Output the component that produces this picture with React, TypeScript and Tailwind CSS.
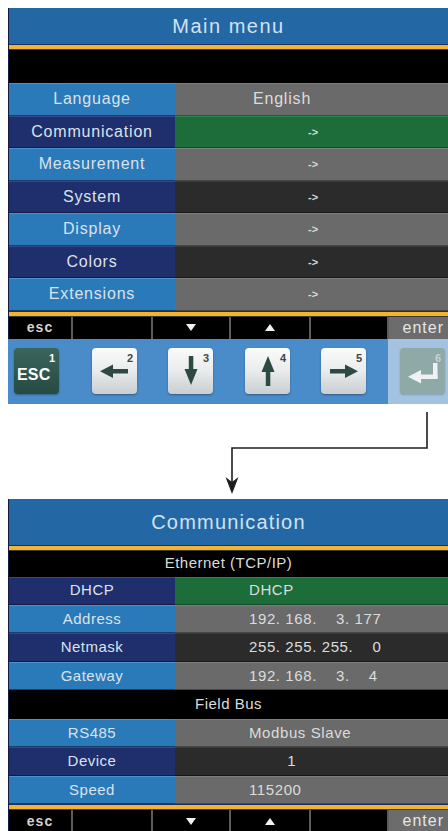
import React from "react";

const LEFT: Record<string, string> = {
  light: "bg-[#2a79b9] border-t border-t-[#4a93cc] border-b border-b-[#1a3e6a]",
  navy: "bg-[#1f2e6c] border-t border-t-[#34488a] border-b border-b-[#101a45]",
};
const RIGHT: Record<string, string> = {
  gray: "bg-[#6a6a6a] border-t border-t-[#7e7e7e] border-b border-b-[#474747]",
  green: "bg-[#1c6d39] border-t border-t-[#2c8450] border-b border-b-[#124a26]",
  dark: "bg-[#2b2b2b] border-t border-t-[#3a3a3a] border-b border-b-[#161616]",
};

type RowProps = {
  label: string;
  value: string;
  l: string;
  r: string;
  big?: boolean;
  arrow?: boolean;
  valueClass?: string;
};

function Row({ label, value, l, r, big, arrow, valueClass }: RowProps) {
  return (
    <div className={big ? "flex h-[32.5px]" : "flex h-[28.4px]"}>
      <div
        className={`w-[166px] flex items-center justify-center text-[#dbe2ea] ${
          big ? "text-[16px] tracking-[0.8px]" : "text-[15px] tracking-[0.5px]"
        } ${LEFT[l]}`}
      >
        {label}
      </div>
      <div
        className={`flex-1 flex items-center whitespace-pre ${RIGHT[r]} ${
          arrow
            ? "pl-[133px] text-[11px] text-[#d8d8d8] font-bold"
            : big
            ? "pl-[78px] text-[16px] tracking-[0.8px] text-[#dcdcdc]"
            : "pl-[74px] text-[15px] tracking-[0.6px] text-[#dcdcdc]"
        } ${valueClass ?? ""}`}
      >
        {value}
      </div>
    </div>
  );
}

function Sep() {
  return (
    <div className="h-[6px] bg-[#f2b431] border-t-[1.5px] border-t-[#1d2f5e] border-b-[1.5px] border-b-[#3a3a3a]" />
  );
}

function TriDown() {
  return (
    <svg width="10" height="7" viewBox="0 0 10 7">
      <polygon points="0,0 10,0 5,7" fill="#f2f2f2" />
    </svg>
  );
}
function TriUp() {
  return (
    <svg width="10" height="7" viewBox="0 0 10 7">
      <polygon points="0,7 10,7 5,0" fill="#f2f2f2" />
    </svg>
  );
}

function FnBar() {
  const cell = "h-full flex items-center justify-center border-r-2 border-r-[#5c5c5c]";
  return (
    <div className="flex h-[22px] bg-black text-[14px] tracking-[1px] text-[#d2d2d2] font-bold">
      <div className={`${cell} w-[64px]`}>esc</div>
      <div className={`${cell} w-[80px]`} />
      <div className={`${cell} w-[78px]`}>
        <TriDown />
      </div>
      <div className={`${cell} w-[80px]`}>
        <TriUp />
      </div>
      <div className={`${cell} w-[78px]`} />
      <div className="h-full flex-1 flex items-center justify-end pr-[4px] bg-[#6c6c6c] font-normal text-[16px] tracking-[1px] text-[#e6e6e6]">
        enter
      </div>
    </div>
  );
}

function Key({ n, children, ml }: { n: string; children: React.ReactNode; ml: string }) {
  return (
    <div
      className={`relative w-[45px] h-[46px] rounded-[4px] bg-gradient-to-b from-[#fbfbfb] via-[#e9ebec] to-[#c9ced1] shadow-[0_1px_2px_rgba(0,0,0,0.35)] ${ml}`}
    >
      <span className="absolute right-[4px] top-[2px] text-[11px] font-bold text-[#3c474b]">{n}</span>
      <svg className="absolute inset-0" width="45" height="46" viewBox="0 0 45 46">
        {children}
      </svg>
    </div>
  );
}

const AC = "#2c4942";

export default function App() {
  return (
    <div className="w-[448px] h-[831px] overflow-hidden bg-white font-['Liberation_Sans',Arial,sans-serif]">
      {/* Main menu screen */}
      <div className="pt-[8px] pl-[8px]">
        <div className="border-l border-l-[#141a40]">
          <div className="h-[36px] bg-[#2467a5] flex items-center justify-center text-[20px] tracking-[1.5px] text-[#d3e2f0]">
            Main menu
          </div>
          <Sep />
          <div className="h-[33px] bg-black" />
          <Row big label="Language" value="English" l="light" r="gray" valueClass="pl-[78px]" />
          <Row big arrow label="Communication" value="->" l="navy" r="green" />
          <Row big arrow label="Measurement" value="->" l="light" r="gray" />
          <Row big arrow label="System" value="->" l="navy" r="dark" />
          <Row big arrow label="Display" value="->" l="light" r="gray" />
          <Row big arrow label="Colors" value="->" l="navy" r="dark" />
          <Row big arrow label="Extensions" value="->" l="light" r="gray" />
          <Sep />
          <FnBar />
        </div>
        {/* keypad */}
        <div className="flex h-[65px]">
          <div className="w-[380px] bg-[#4a8bca] flex items-center">
            <div className="relative ml-[6px] w-[45px] h-[46px] rounded-[4px] bg-gradient-to-b from-[#3a665d] to-[#264a43] shadow-[0_1px_2px_rgba(0,0,0,0.35)]">
              <span className="absolute right-[4px] top-[2px] text-[11px] font-bold text-white">1</span>
              <span className="absolute left-[3px] top-[15px] text-[16px] font-bold text-white tracking-[0.2px]">
                ESC
              </span>
            </div>
            <Key n="2" ml="ml-[33px]">
              <rect x="17" y="21" width="19" height="4.5" fill={AC} />
              <polygon points="8,23.2 21,16.5 21,30" fill={AC} />
            </Key>
            <Key n="3" ml="ml-[31px]">
              <rect x="20.8" y="8" width="4.5" height="16" fill={AC} />
              <polygon points="23,37 16.5,21 29.5,21" fill={AC} />
            </Key>
            <Key n="4" ml="ml-[32px]">
              <rect x="20.8" y="22" width="4.5" height="16" fill={AC} />
              <polygon points="23,8 16.5,24 29.5,24" fill={AC} />
            </Key>
            <Key n="5" ml="ml-[31px]">
              <rect x="9" y="21" width="19" height="4.5" fill={AC} />
              <polygon points="37,23.2 24,16.5 24,30" fill={AC} />
            </Key>
          </div>
          <div className="flex-1 bg-[#a3c3e0] flex items-center pl-[12px]">
            <div className="relative w-[45px] h-[46px] rounded-[4px] bg-[#8ea9a6] shadow-[0_1px_2px_rgba(0,0,0,0.2)]">
              <span className="absolute right-[4px] top-[2px] text-[11px] font-bold text-[#c4d2d0]">6</span>
              <svg className="absolute inset-0" width="45" height="46" viewBox="0 0 45 46">
                <rect x="33" y="15" width="4.5" height="16" fill="#eef2f2" />
                <rect x="18" y="26.5" width="19.5" height="4.5" fill="#eef2f2" />
                <polygon points="8,28.7 21,22 21,35.5" fill="#eef2f2" />
              </svg>
            </div>
          </div>
        </div>
      </div>

      {/* connector */}
      <div className="h-[95px]">
        <svg width="448" height="95" viewBox="0 0 448 95">
          <path d="M427 8 V44 H232 V80" fill="none" stroke="#1e1e1e" strokeWidth="1.6" />
          <polygon points="225.5,73 232,78 238.5,73 232,90" fill="#1e1e1e" />
        </svg>
      </div>

      {/* Communication screen */}
      <div className="pl-[8px]">
        <div className="border-l border-l-[#141a40]">
          <div className="h-[46px] bg-[#2467a5] flex items-center justify-center text-[20px] tracking-[1.2px] text-[#d3e2f0]">
            Communication
          </div>
          <Sep />
          <div className="h-[26px] bg-black flex items-center justify-center text-[15px] tracking-[0.5px] text-[#dcdcdc]">
            Ethernet (TCP/IP)
          </div>
          <Row label="DHCP" value="DHCP" l="navy" r="green" valueClass="text-[#d9ecd6]" />
          <Row label="Address" value={"192. 168.    3. 177"} l="light" r="gray" />
          <Row label="Netmask" value={"255. 255. 255.    0"} l="navy" r="dark" />
          <Row label="Gateway" value={"192. 168.    3.    4"} l="light" r="gray" />
          <div className="h-[29px] bg-black flex items-center justify-center text-[15px] tracking-[0.5px] text-[#dcdcdc]">
            Field Bus
          </div>
          <Row label="RS485" value="Modbus Slave" l="light" r="gray" />
          <Row label="Device" value="        1" l="navy" r="dark" />
          <Row label="Speed" value="115200" l="light" r="gray" />
          <Sep />
          <FnBar />
        </div>
      </div>
    </div>
  );
}
